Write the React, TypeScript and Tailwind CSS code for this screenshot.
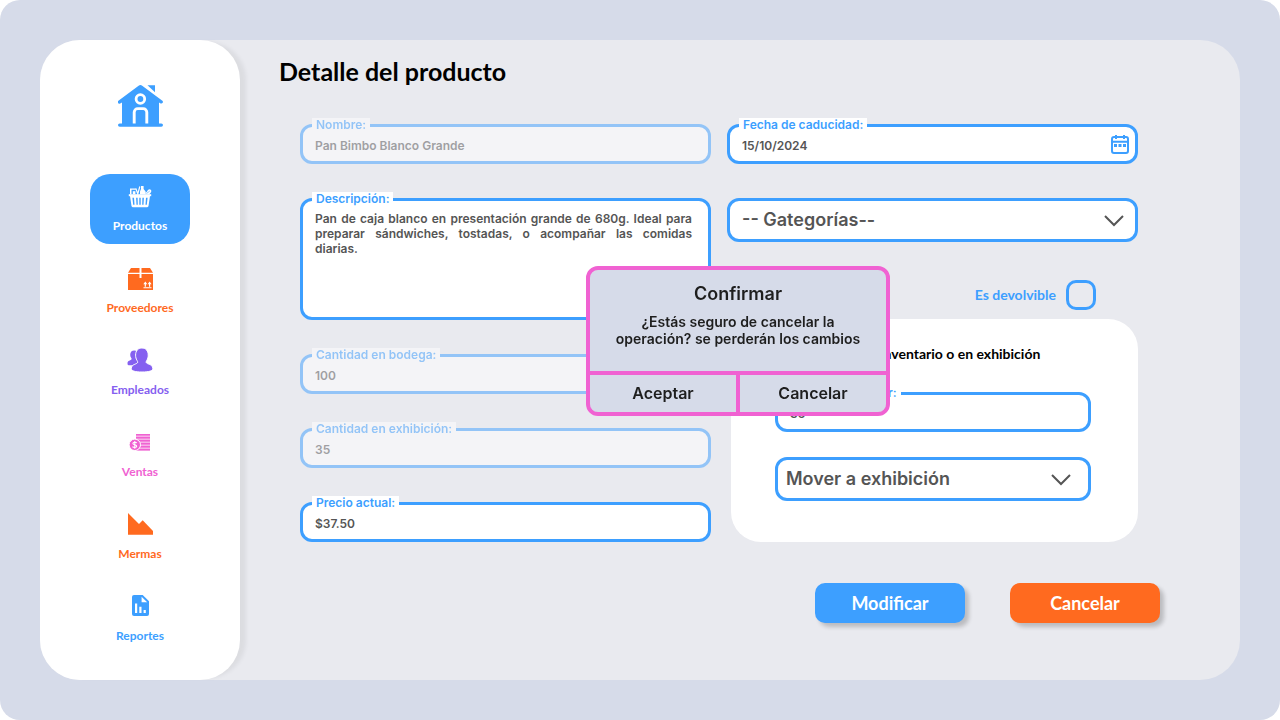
import type { ReactNode } from "react";

const display = "font-['Lato','Noto_Sans',sans-serif]";
const body = "font-['Inter','Noto_Sans',sans-serif]";

function HouseIcon() {
  return (
    <svg width="45" height="42" viewBox="0 0 45 42" aria-hidden="true">
      <g fill="#3d9fff">
        <path d="M20.6.7a3 3 0 0 1 3.6 0L44.4 15.8a1.6 1.6 0 0 1-1.8 2.6L41 17.4V39H4V17.4l-1.8 1.1a1.6 1.6 0 0 1-1.8-2.7Z" />
        <rect x="0" y="38.4" width="45" height="3.4" rx="1.7" />
        <path d="M29.5.2H37v7Z" />
      </g>
      <circle cx="22.4" cy="14" r="4.3" fill="none" stroke="#fff" strokeWidth="2.8" />
      <path d="M16.2 38.4V27.2a3.6 3.6 0 0 1 3.6-3.6h5.4a3.6 3.6 0 0 1 3.6 3.6v11.2" fill="none" stroke="#fff" strokeWidth="2.9" />
    </svg>
  );
}

function BasketIcon() {
  return (
    <svg width="24" height="23" viewBox="0 0 24 23" fill="currentColor" aria-hidden="true">
      <path d="M.8 9.2h22.4v2H.8Z" />
      <path fillRule="evenodd" d="M2 11h20l-1.5 10.1a1.3 1.3 0 0 1-1.3 1.1H4.8a1.3 1.3 0 0 1-1.3-1.1ZM4.4 12.8l.8 7h1.3l-.5-7Zm3.7 0 .4 7h1.3l-.2-7Zm3.2 0v7h1.4v-7Zm3.1 0-.2 7h1.3l.4-7Zm3.6 0-.5 7h1.3l.8-7Z" />
      <path d="M2 3.5h5.8v1.3H3.5v4.4H2Z" />
      <path d="M4.8 6.2h2.6v3H4.8Z" />
      <path d="m7.8 3.5 2 5.3 2-7.3" fill="none" stroke="currentColor" strokeWidth="1.2" />
      <path d="M13 1h2.6v3l2 2.6v2.6H12V6.6L13 4Z" />
      <path d="M17.5 7.6c1.4-.2 1.6-1.6 2.5-2.7 1.3-1.4 3.4-.5 3.3 1.1 0 1.5-1 2.4-2.1 3.2h-3.7Z" />
      <path d="M18.5 8.5 21.8 6" fill="none" stroke="#3d9fff" strokeWidth=".6" />
    </svg>
  );
}

function BoxIcon() {
  return (
    <svg width="25" height="24" viewBox="0 -2 25 24" aria-hidden="true">
      <path d="M3 0h19l3 4.8H0ZM0 6h25v16H0Z" fill="currentColor" />
      <path d="M11.5 0h2v10h-2Z" fill="#fff" />
      <path d="M15.5 19.3h8v1h-8ZM16.7 18.8v-2.6h-1.4l2-2.6 2 2.6h-1.4v2.6ZM21 18.8v-2.6h-1.4l2-2.6 2 2.6h-1.4v2.6Z" fill="#fff" />
    </svg>
  );
}

function PeopleIcon() {
  return (
    <svg width="26" height="24" viewBox="0 0 26 24" aria-hidden="true">
      <path d="M.5 15c0-2.200 3.500-2.400 4.200-3.900.2-.8-1.500-1.800-1.500-4.400 0-2.800 1.600-4.300 4-4.300s4 1.600 4 4.200c0 2.400-1.600 3.400-1.500 4.200.2 1.200 2 1.400 2 3.700l-5 2.700H1.600C.8 17.200.5 16.500.5 15Z" fill="currentColor" />
      <path d="M4.300 20.500c0-4.600 5.700-3.900 6.400-6.200.2-1.300-2.100-2.600-2.100-7.200C8.600 2.800 11 0 14.900 0s6.300 2.800 6.300 7.100c0 4.600-2.300 5.900-2.100 7.200.7 2.300 6.700 1.600 6.700 6.200 0 2.300-3.300 3.500-10.800 3.500S4.300 22.800 4.300 20.500Z" fill="currentColor" stroke="#fff" strokeWidth="1" />
    </svg>
  );
}

function MoneyIcon() {
  return (
    <svg width="22" height="17" viewBox="0 0 22 17" aria-hidden="true">
      <path d="M7 0h14v16.5H7Z" fill="currentColor" opacity=".5" />
      <path d="M7 .7h14M7 3.7h14M7 6.700h14M7 9.7h14M7 12.7h14M7 15.7h14" stroke="currentColor" strokeWidth="1.5" />
      <circle cx="5.8" cy="10.8" r="5.7" fill="currentColor" stroke="#fff" strokeWidth="1" />
      <path d="M7.8 9c-.5-.8-3.800-1.200-3.900.4 0 1.600 3.800 1 3.800 2.800 0 1.600-3.400 1.500-4.200.4M5.800 7v7.700" fill="none" stroke="#fff" strokeWidth="1.1" />
    </svg>
  );
}

function LossIcon() {
  return (
    <svg width="25" height="22" viewBox="0 0 25 22" aria-hidden="true">
      <path d="m0 0 11 11 3.7-3.7L25 18v3.700H0Z" fill="currentColor" />
    </svg>
  );
}

function ReportIcon() {
  return (
    <svg width="17" height="22" viewBox="0 0 17 22" aria-hidden="true">
      <path d="M2 0h8.700L17 6.300V19a2 2 0 0 1-2 2H2a2 2 0 0 1-2-2V2a2 2 0 0 1 2-2Z" fill="currentColor" />
      <path d="M9.600 1.700v5.600h5.600ZM3 8.600h2.200V18H3ZM7.300 11.700h2.200V18H7.300ZM11.600 15h2.200v3h-2.200Z" fill="#fff" />
    </svg>
  );
}

function CalendarIcon() {
  return (
    <svg width="18" height="19" viewBox="0 0 18 19" aria-hidden="true">
      <rect x="1" y="2" width="16" height="16" rx="2" fill="none" stroke="#3d9fff" strokeWidth="2" />
      <path d="M1 6.800h16M5 0v4M13 0v4" stroke="#3d9fff" strokeWidth="2" />
      <path d="M3 9h3v3H3ZM7.500 9h3v3h-3ZM12 9h3v3h-3Z" fill="#3d9fff" />
    </svg>
  );
}

const navItems = [
  { label: "Productos", icon: <BasketIcon />, tone: "bg-[#3d9fff] text-white" },
  { label: "Proveedores", icon: <BoxIcon />, tone: "text-[#ff6a1f]" },
  { label: "Empleados", icon: <PeopleIcon />, tone: "text-[#8560f0]" },
  { label: "Ventas", icon: <MoneyIcon />, tone: "text-[#f062d2]" },
  { label: "Mermas", icon: <LossIcon />, tone: "text-[#ff6a1f]" },
  { label: "Reportes", icon: <ReportIcon />, tone: "text-[#3d9fff]" },
];

const box = "block w-full rounded-xl border-3 border-[#3d9fff] bg-white text-[#555] outline-none";
const smallText = "text-xs font-semibold";

function Field({ id, label, disabled, children }: { id: string; label: string; disabled?: boolean; children: ReactNode }) {
  return (
    <div className={disabled ? "relative opacity-50" : "relative"}>
      {children}
      <label htmlFor={id} className="absolute -top-1.5 left-3 bg-white px-1 text-xs leading-[14px] font-semibold text-[#3d9fff]">
        {label}
      </label>
    </div>
  );
}

function TextField({ id, label, value, disabled, children }: { id: string; label: string; value: string; disabled?: boolean; children?: ReactNode }) {
  return (
    <Field id={id} label={label} disabled={disabled}>
      <input id={id} defaultValue={value} disabled={disabled} className={`${box} ${smallText} h-10 px-3 pt-0.5`} />
      {children}
    </Field>
  );
}

function SelectField({ label, value, pad, chevron }: { label: string; value: string; pad: string; chevron: string }) {
  return (
    <div className="relative">
      <select aria-label={label} className={`${box} h-11 appearance-none text-lg leading-6 font-semibold ${pad}`}>
        <option>{value}</option>
      </select>
      <svg className={`pointer-events-none absolute top-[17px] ${chevron}`} width="20" height="12" viewBox="0 0 20 12" fill="none" stroke="#555" strokeWidth="2" aria-hidden="true">
        <path d="m1 1 9 9 9-9" />
      </svg>
    </div>
  );
}

export default function App() {
  return (
    <div className="bg-white">
      <div className={`flex min-h-screen rounded-[20px] bg-[#d6dbe9] p-10 ${body}`}>
        <div className="flex flex-1 rounded-[40px] bg-[#e9eaef]">
          <aside className="flex w-[200px] shrink-0 flex-col items-center rounded-[40px] bg-white pt-[45px] shadow-[8px_0_4px_-2px_rgba(0,0,0,0.06)]">
            <a href="#inicio" aria-label="Inicio">
              <HouseIcon />
            </a>
            <nav className={`mt-[47px] flex flex-col gap-3 ${display}`}>
              {navItems.map((item) => (
                <a key={item.label} href={`#${item.label.toLowerCase()}`} className={`flex h-[70px] w-[100px] flex-col items-center rounded-[20px] pt-2 text-xs leading-4 font-bold ${item.tone}`}>
                  <span className="mb-2 flex h-7 items-center">{item.icon}</span>
                  {item.label}
                </a>
              ))}
            </nav>
          </aside>

          <main className="flex-1 pt-4">
            <h1 className={`pl-[39px] text-[25px] leading-[30px] font-bold text-black ${display}`}>Detalle del producto</h1>

            <div className="relative mt-[38px] mr-16 ml-[60px]">
              <form>
                <div className="grid grid-cols-2 gap-4 pr-[38px]">
                  <div className="flex flex-col gap-[34px]">
                    <TextField id="nombre" label="Nombre:" value="Pan Bimbo Blanco Grande" disabled />
                    <Field id="descripcion" label="Descripción:">
                      <textarea
                        id="descripcion"
                        className={`${box} ${smallText} h-[122px] resize-none py-2.5 pr-4 pl-3 text-justify leading-[15px]`}
                        defaultValue="Pan de caja blanco en presentación grande de 680g. Ideal para preparar sándwiches, tostadas, o acompañar las comidas diarias."
                      />
                    </Field>
                    <TextField id="bodega" label="Cantidad en bodega:" value="100" disabled />
                    <TextField id="exhibicion" label="Cantidad en exhibición:" value="35" disabled />
                    <TextField id="precio" label="Precio actual:" value="$37.50" />
                  </div>

                  <div className="flex flex-col">
                    <TextField id="caducidad" label="Fecha de caducidad:" value="15/10/2024">
                      <button type="button" aria-label="Abrir calendario" className="absolute top-[11px] right-[9px]">
                        <CalendarIcon />
                      </button>
                    </TextField>
                    <div className="mt-[34px]">
                      <SelectField label="Categorías" value="-- Gategorías--" pad="px-3" chevron="right-3.5" />
                    </div>
                    <label className={`mt-[38px] mr-[42px] flex items-center gap-2.5 self-end text-sm font-bold text-[#3d9fff] ${display}`}>
                      Es devolvible
                      <input type="checkbox" className="size-[30px] appearance-none rounded-[10px] border-3 border-[#3d9fff] checked:bg-[#3d9fff]" />
                    </label>
                    <section className="mt-[9px] ml-1 flex flex-1 flex-col rounded-[30px] bg-white pt-[25px] pr-[47px] pl-11">
                      <h2 className={`text-center text-sm leading-5 font-bold whitespace-nowrap text-black ${display}`}>Mover a inventario o en exhibición</h2>
                      <div className="mt-7 mb-[25px]">
                        <TextField id="mover" label="Cantidad a mover:" value="35" />
                      </div>
                      <SelectField label="Destino" value="Mover a exhibición" pad="px-2" chevron="right-5" />
                    </section>
                  </div>
                </div>

                <div className={`mt-[41px] flex justify-end gap-[45px] pr-4 text-lg font-bold text-white ${display}`}>
                  <button type="button" className="h-10 w-[150px] rounded-[10px] bg-[#3d9fff] shadow-[4px_4px_4px_rgba(0,0,0,0.2)]">
                    Modificar
                  </button>
                  <button type="button" className="h-10 w-[150px] rounded-[10px] bg-[#ff6a1f] shadow-[4px_4px_4px_rgba(0,0,0,0.2)]">
                    Cancelar
                  </button>
                </div>
              </form>

              <div role="dialog" aria-labelledby="confirmar" className="absolute top-[142px] left-1/2 w-[304px] -translate-x-1/2 overflow-hidden rounded-xl border-4 border-[#f062d2] bg-[#d6dbe9] text-center font-semibold text-[#1e1e1e]">
                <h2 id="confirmar" className="pt-3 text-lg leading-6 font-semibold">Confirmar</h2>
                <p className="mt-[7px] mb-6 px-2 text-sm leading-[17px]">
                  ¿Estás seguro de cancelar la
                  <br />
                  operación? se perderán los cambios
                </p>
                <div className="grid grid-cols-2 gap-1 border-t-4 border-[#f062d2] bg-[#f062d2] text-base">
                  <button type="button" className="h-[37px] bg-[#d6dbe9] pb-0.5">Aceptar</button>
                  <button type="button" className="h-[37px] bg-[#d6dbe9] pb-0.5">Cancelar</button>
                </div>
              </div>
            </div>
          </main>
        </div>
      </div>
    </div>
  );
}
